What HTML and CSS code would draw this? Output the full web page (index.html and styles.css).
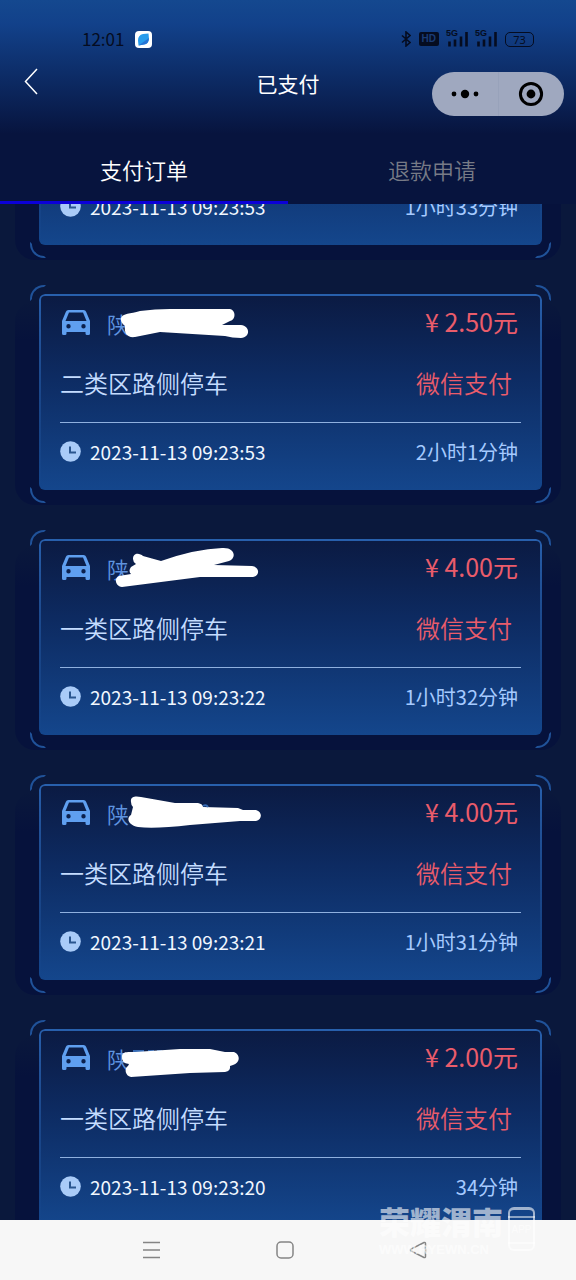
FILE: index.html
```html
<!DOCTYPE html>
<html lang="zh-CN">
<head>
<meta charset="utf-8">
<meta name="viewport" content="width=device-width, initial-scale=1">
<title>已支付</title>
<link rel="stylesheet" href="styles.css">
</head>
<body>
<svg class="sprite" aria-hidden="true">
  <symbol id="car" viewBox="0 0 28 26">
    <path fill-rule="evenodd" d="M6.500 0h15q2 0 2.600 1.800L28 11v12.500q0 1.500-1.500 1.500H25q-1.500 0-1.500-1.500V22h-19v1.500q0 1.500-1.500 1.500H1.500Q0 25 0 23.500V11L3.900 1.800Q4.500 0 6.500 0ZM7 2.500 3.500 11h21L21 2.500ZM6.500 14a2.200 2.200 0 1 0 0 4.400 2.200 2.200 0 0 0 0-4.400Zm15 0a2.200 2.200 0 1 0 0 4.400 2.200 2.200 0 0 0 0-4.400Z" fill="#5f9ff0"/>
  </symbol>
  <symbol id="clock" viewBox="0 0 21 21">
    <circle cx="10.500" cy="10.500" r="10.300" fill="#a9cbf8"/>
    <path d="M10 5.500v6h6" fill="none" stroke="#2a568f" stroke-width="2"/>
  </symbol>
  <symbol id="signal" viewBox="0 0 21 16">
    <path d="M2.500 10.500v5M8 8.500v7M14 5.500v10M19.500 1v14.500" fill="none" stroke="#050c20" stroke-width="2.600"/>
  </symbol>
</svg>
<div class="phone">
  <header class="header">
    <div class="status">
      <div class="status-left">
        <time>12:01</time>
        <svg width="17" height="17" viewBox="0 0 17 17"><rect width="17" height="17" rx="4" fill="#fff"/><path d="M3 9.500Q3 4 8 3L13.500 2.500 14 8Q13.500 13 9 13.500L3.500 14.500Z" fill="#279cec"/><path d="M3.500 14.500 14 7Q13.500 13 9 13.500Z" fill="#2674d5"/></svg>
      </div>
      <div class="status-right">
        <svg width="10" height="16" viewBox="0 0 10 16"><path d="M1 4.500 9 11.500 5 15V1l4 3.500L1 11.500" fill="none" stroke="#050c20" stroke-width="1.600"/></svg>
        <span class="hd">HD</span>
        <span class="signal"><svg width="21" height="16"><use href="#signal"/></svg><span class="net">5G</span></span>
        <span class="signal"><svg width="21" height="16"><use href="#signal"/></svg><span class="net">5G</span></span>
        <span class="battery">73</span>
      </div>
    </div>
    <div class="nav">
      <button class="back" aria-label="返回"><svg width="14" height="27" viewBox="0 0 14 27"><path d="M13 1 1.500 13.500 13 26" fill="none" stroke="#fff" stroke-width="1.500"/></svg></button>
      <h1 class="title">已支付</h1>
      <div class="capsule">
        <button class="capsule-btn" aria-label="更多"><svg width="28" height="10" viewBox="0 0 28 10"><circle cx="3" cy="5" r="2.400"/><circle cx="14" cy="5" r="4.200"/><circle cx="25" cy="5" r="2.400"/></svg></button>
        <button class="capsule-btn" aria-label="关闭"><svg width="26" height="26" viewBox="0 0 26 26"><circle cx="13" cy="13" r="10.600" fill="none" stroke="#000" stroke-width="3"/><circle cx="13" cy="13" r="4.400"/></svg></button>
      </div>
    </div>
    <div class="tabs" role="tablist">
      <button class="tab active" role="tab" aria-selected="true">支付订单</button>
      <button class="tab" role="tab" aria-selected="false">退款申请</button>
    </div>
  </header>

  <main class="list">
    <article class="frame">
      <i class="corner tl"></i><i class="corner tr"></i><i class="corner bl"></i><i class="corner br"></i>
      <div class="card">
        <div class="row head"><svg class="car" width="28" height="26"><use href="#car"/></svg><span class="plate">陕</span><span class="price">¥ 4.00元</span></div>
        <div class="row kind"><span class="zone">一类区路侧停车</span><span class="method">微信支付</span></div>
        <div class="row foot"><svg class="clock" width="21" height="21"><use href="#clock"/></svg><time class="date">2023-11-13 09:23:53</time><span class="duration">1小时33分钟</span></div>
      </div>
    </article>

    <article class="frame">
      <i class="corner tl"></i><i class="corner tr"></i><i class="corner bl"></i><i class="corner br"></i>
      <div class="card">
        <div class="row head"><svg class="car" width="28" height="26"><use href="#car"/></svg><span class="plate">陕<svg class="mask" width="160" height="50" viewBox="105 300 160 50"><path d="M121 318C123 313 130 314 140 311Q155 309 170 309H230C236 310 236 320 230 321L222 325H241C250 326 251 337 241 338Q232 338 225 336L160 332 135 337C127 338 124 333 125 326Q120 322 121 318Z"/></svg></span><span class="price">¥ 2.50元</span></div>
        <div class="row kind"><span class="zone">二类区路侧停车</span><span class="method">微信支付</span></div>
        <div class="row foot"><svg class="clock" width="21" height="21"><use href="#clock"/></svg><time class="date">2023-11-13 09:23:53</time><span class="duration">2小时1分钟</span></div>
      </div>
    </article>

    <article class="frame">
      <i class="corner tl"></i><i class="corner tr"></i><i class="corner bl"></i><i class="corner br"></i>
      <div class="card">
        <div class="row head"><svg class="car" width="28" height="26"><use href="#car"/></svg><span class="plate">陕<svg class="mask" width="160" height="50" viewBox="105 545 160 50"><path d="M133 559C133 552 140 553 143 556L161 561Q195 549 222 548C235 547 237 558 229 561L214 565 252 566C260 567 260 576 253 577L200 577 122 587C115 586 114 578 119 576L131 574Q128 571 131 567L136 564Q133 562 133 559Z"/></svg></span><span class="price">¥ 4.00元</span></div>
        <div class="row kind"><span class="zone">一类区路侧停车</span><span class="method">微信支付</span></div>
        <div class="row foot"><svg class="clock" width="21" height="21"><use href="#clock"/></svg><time class="date">2023-11-13 09:23:22</time><span class="duration">1小时32分钟</span></div>
      </div>
    </article>

    <article class="frame">
      <i class="corner tl"></i><i class="corner tr"></i><i class="corner bl"></i><i class="corner br"></i>
      <div class="card">
        <div class="row head"><svg class="car" width="28" height="26"><use href="#car"/></svg><span class="plate">陕<svg class="mask" width="160" height="50" viewBox="105 790 160 50"><path d="M131 802C130 796 136 796 141 797L175 803 198 803Q203 804 203 807L238 808 243 810H256C263 812 262 820 256 821L240 821 190 825Q155 829 138 827C128 825 126 818 131 815L133 807Q131 805 131 802Z"/><path class="trace" d="M203 806q3-2 5 1"/></svg></span><span class="price">¥ 4.00元</span></div>
        <div class="row kind"><span class="zone">一类区路侧停车</span><span class="method">微信支付</span></div>
        <div class="row foot"><svg class="clock" width="21" height="21"><use href="#clock"/></svg><time class="date">2023-11-13 09:23:21</time><span class="duration">1小时31分钟</span></div>
      </div>
    </article>

    <article class="frame">
      <i class="corner tl"></i><i class="corner tr"></i><i class="corner bl"></i><i class="corner br"></i>
      <div class="card">
        <div class="row head"><svg class="car" width="28" height="26"><use href="#car"/></svg><span class="plate">陕<svg class="mask" width="160" height="50" viewBox="105 1035 160 50"><path class="trace" d="M133 1051h11m4 0h6m3 0h5"/><path d="M122 1056C122 1051 129 1052 135 1052L180 1049 210 1049 225 1052H234C241 1055 240 1063 233 1065L230 1066Q231 1071 225 1072L190 1073 131 1077C125 1076 124 1068 128 1066L129 1064Q121 1063 122 1056Z"/></svg></span><span class="price">¥ 2.00元</span></div>
        <div class="row kind"><span class="zone">一类区路侧停车</span><span class="method">微信支付</span></div>
        <div class="row foot"><svg class="clock" width="21" height="21"><use href="#clock"/></svg><time class="date">2023-11-13 09:23:20</time><span class="duration">34分钟</span></div>
      </div>
    </article>
  </main>

  <footer class="system">
    <button class="key" aria-label="最近任务"><svg width="18" height="18" viewBox="0 0 18 18"><path d="M0 1.500h17M0 9h17M0 16.500h17"/></svg></button>
    <button class="key" aria-label="主页"><svg width="18" height="18" viewBox="0 0 18 18"><rect x="1" y="1" width="16" height="16" rx="4"/></svg></button>
    <button class="key" aria-label="后退"><svg width="18" height="18" viewBox="0 0 18 18"><path d="M15 1.500Q16.500 1 16.500 2.500v13q0 1.500-1.500 1L2 10Q1 9 2 8Z"/></svg></button>
    <div class="watermark">
      <div class="brand"><strong class="brand-name">荣耀渭南</strong><span class="brand-url">WWW.RYEWN.CN</span></div>
      <div class="brand-app"><span>APP</span></div>
    </div>
  </footer>
</div>
</body>
</html>
```

FILE: styles.css
```css
* { box-sizing: border-box; }

body {
  margin: 0;
  font-family: "Noto Sans CJK SC", "Noto Sans", sans-serif;
  font-weight: 350;
  background: #07143e;
}

button {
  padding: 0;
  border: 0;
  background: none;
  font: inherit;
  color: inherit;
}

svg { display: block; flex: none; }
.sprite { display: none; }

.phone {
  display: flex;
  flex-direction: column;
  height: 100vh;
  overflow: hidden;
}

.header {
  flex: none;
  color: #fff;
  background: linear-gradient(#14488f 0, #12418a 24px, #07143e 134px);
}

.status {
  display: flex;
  justify-content: space-between;
  align-items: center;
  height: 60px;
  padding: 18px 42px 0 82px;
  color: #050c20;
}

.status-left,
.status-right { display: flex; align-items: center; }
.status-left { gap: 11px; font: 17px/20px "Noto Sans CJK SC", sans-serif; }
.status-right { gap: 8px; }

.hd {
  padding: 0 3px;
  border-radius: 2px;
  background: #050c20;
  color: #1a3c76;
  font: bold 10px/14px "Liberation Sans", sans-serif;
}

.signal { position: relative; }
.net {
  position: absolute;
  top: -2px;
  left: -1px;
  font: bold 9px/9px "Liberation Sans", sans-serif;
}

.battery {
  width: 29px;
  border: 1px solid #050c20;
  border-radius: 5px;
  font: 11px/13px "Noto Sans", sans-serif;
  text-align: center;
}

.nav {
  display: grid;
  grid-template-columns: 1fr auto 1fr;
  align-items: start;
  height: 76px;
  padding: 0 12px 0 24px;
}

.back { margin-top: 8px; justify-self: start; }
.title {
  margin: 0 0 0 -12px;
  font-size: 21px;
  font-weight: 400;
  line-height: 46px;
}

.capsule {
  display: flex;
  justify-self: end;
  width: 132px;
  height: 44px;
  margin-top: 12px;
  border-radius: 22px;
  background: #9fa8bf;
}
.capsule-btn { display: grid; flex: 1; place-items: center; }
.capsule-btn + .capsule-btn { border-left: 1px solid #98a2ba; }

.tabs { display: flex; }
.tab {
  flex: 1;
  height: 68px;
  border-bottom: 3px solid transparent;
  font-size: 22px;
  color: #777b86;
}
.tab.active { border-color: #0b00d8; color: #fff; }

.list {
  display: flex;
  flex: 1;
  flex-direction: column;
  gap: 27px;
  min-height: 0;
  overflow: hidden;
  padding: 0 25px 0 30px;
  background: #0a183c;
}
.list .frame:first-child { margin-top: -164px; }

.frame {
  position: relative;
  flex: none;
  padding: 9px 9px 13px;
}
.frame::before {
  content: "";
  position: absolute;
  inset: 16px -10px -2px -15px;
  border-radius: 20px;
  background: linear-gradient(#06123c00, #06123c 40px);
}

.corner {
  position: absolute;
  width: 16px;
  height: 16px;
  border: 2px solid transparent;
}
.tl { top: 0; left: 0; border-top-color: #205299; border-left-color: #205299; border-radius: 14px 0 0 0; }
.tr { top: 0; right: 0; border-top-color: #205299; border-right-color: #205299; border-radius: 0 14px 0 0; }
.bl { bottom: 0; left: 0; border-bottom-color: #205299; border-left-color: #205299; border-radius: 0 0 0 14px; }
.br { bottom: 0; right: 0; border-bottom-color: #205299; border-right-color: #205299; border-radius: 0 0 14px 0; }

.card {
  position: relative;
  padding: 1px 21px 9px;
  border-radius: 6px;
  background: linear-gradient(#0b1a42, #0d2b62 42%, #14468c);
}
.card::after {
  content: "";
  position: absolute;
  inset: 0;
  border: 2px solid #2860ad;
  border-bottom: 0;
  border-radius: 6px;
  mask-image: linear-gradient(#000, #0000);
}

.row {
  display: flex;
  align-items: center;
  height: 58px;
  padding: 0 3px 0 0;
}
.row.head,
.row.foot { padding-bottom: 2px; }
.row.kind {
  height: 70px;
  padding: 0 9px 11px 0;
  border-bottom: 1px solid #8fb0df;
}

.car { margin-right: 17px; margin-left: 2px; }
.plate { position: relative; font-size: 22px; color: #5f94e0; }
.mask {
  position: absolute;
  top: -7px;
  left: -2px;
  fill: #fff;
}
.trace { fill: none; stroke: #376cb5; stroke-width: 2; }

.price,
.method,
.duration { margin-left: auto; white-space: nowrap; }
.price {
  padding-bottom: 4px;
  font-size: 25px;
  font-weight: 400;
  color: #ea5c6b;
}
.method { font-size: 24px; color: #ea5c6b; }
.zone { font-size: 24px; color: #c4dcff; }
.clock { margin-right: 9px; }
.date { font-size: 19px; font-weight: 400; color: #f1f7ff; }
.duration { font-size: 20px; font-weight: 400; color: #a5caff; }

.system {
  position: relative;
  display: flex;
  flex: none;
  justify-content: center;
  align-items: center;
  gap: 115px;
  height: 60px;
  padding-right: 6px;
  background: #f7f7f7;
}
.key svg { fill: none; stroke: #858585; stroke-width: 1.5; }

.watermark {
  position: absolute;
  top: -15px;
  right: 41px;
  display: flex;
  gap: 5px;
  color: #ffffff99;
  pointer-events: none;
}
.brand { display: flex; flex-direction: column; gap: 6px; }
.brand-name { font-size: 31px; font-weight: 900; line-height: 32px; }
.brand-url { font: bold 13px/14px "Liberation Sans", sans-serif; }
.brand-app {
  display: grid;
  place-items: center;
  width: 27px;
  height: 44px;
  margin-top: 2px;
  border: 2px solid;
  border-top-width: 3px;
  border-radius: 6px;
  background: linear-gradient(#0000 6px, #ffffff80 6px 8px, #0000 8px 32px, #ffffff80 32px 34px, #0000 34px);
  font: 10px/12px "Liberation Sans", sans-serif;
}
```
